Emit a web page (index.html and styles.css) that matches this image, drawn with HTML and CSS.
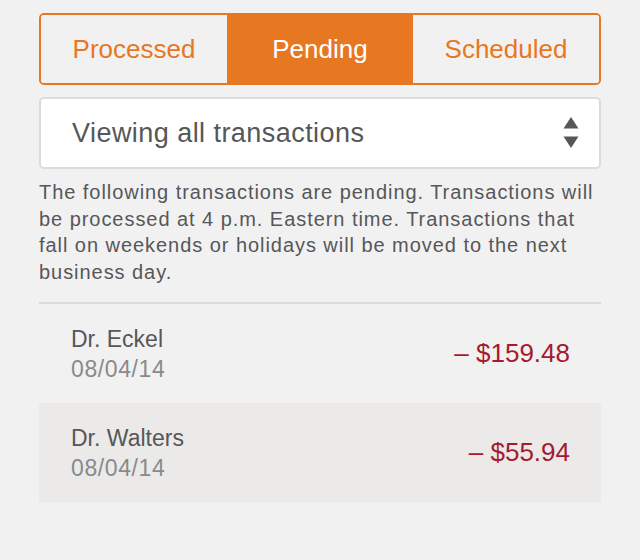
FILE: index.html
```html
<!DOCTYPE html>
<html>
<head>
<meta charset="utf-8">
<link rel="stylesheet" href="styles.css">
</head>
<body>
<div class="page">
  <div class="tabs">
    <div class="tab">Processed</div>
    <div class="tab active">Pending</div>
    <div class="tab">Scheduled</div>
  </div>
  <div class="select">
    <span class="select-label">Viewing all transactions</span>
    <svg class="arrows" width="16" height="34" viewBox="0 0 16 34">
      <path d="M8 1 L15.5 12.5 L0.5 12.5 Z" fill="#555759"/>
      <path d="M0.5 20.5 L15.5 20.5 L8 32 Z" fill="#555759"/>
    </svg>
  </div>
  <p class="note">The following transactions are pending. Transactions will be processed at 4 p.m. Eastern time. Transactions that fall on weekends or holidays will be moved to the next business day.</p>
  <div class="list">
    <div class="row">
      <div class="who">
        <div class="name">Dr. Eckel</div>
        <div class="date">08/04/14</div>
      </div>
      <div class="amount">– $159.48</div>
    </div>
    <div class="row alt">
      <div class="who">
        <div class="name">Dr. Walters</div>
        <div class="date">08/04/14</div>
      </div>
      <div class="amount">– $55.94</div>
    </div>
  </div>
</div>
</body>
</html>
```
FILE: styles.css
```css
html, body {
  margin: 0;
  padding: 0;
  background: #f2f1f1;
  font-family: "Liberation Sans", Arial, sans-serif;
}
.page {
  padding: 13px 39px 0 39px;
}
.tabs {
  display: flex;
  height: 72px;
  box-sizing: border-box;
  border: 2px solid #e87722;
  border-radius: 5px;
  overflow: hidden;
}
.tab {
  flex: 1;
  display: flex;
  align-items: center;
  justify-content: center;
  color: #e87722;
  font-size: 26px;
  background: #f2f1f1;
}
.tab.active {
  background: #e87722;
  color: #fff;
}
.select {
  margin-top: 12px;
  height: 72px;
  box-sizing: border-box;
  background: #fff;
  border: 2px solid #dddcdb;
  border-radius: 5px;
  display: flex;
  align-items: center;
  padding: 0 20px 0 31px;
}
.select-label {
  flex: 1;
  font-size: 27px;
  letter-spacing: 0.45px;
  color: #555759;
}
.arrows {
  display: block;
}
.note {
  margin: 10px 0 0 0;
  font-size: 20px;
  letter-spacing: 0.95px;
  line-height: 26.5px;
  color: #555759;
  padding-bottom: 17px;
  border-bottom: 2px solid #dcdbd9;
}
.row {
  height: 99px;
  display: flex;
  align-items: center;
  justify-content: space-between;
  padding: 0 31px 0 32px;
}
.row.alt {
  background: #ebeae8;
}
.name {
  font-size: 23px;
  color: #555759;
  line-height: 30px;
}
.date {
  font-size: 23px;
  letter-spacing: 0.6px;
  color: #888a8c;
  line-height: 30px;
}
.amount {
  font-size: 26px;
  color: #a6192e;
}
```
